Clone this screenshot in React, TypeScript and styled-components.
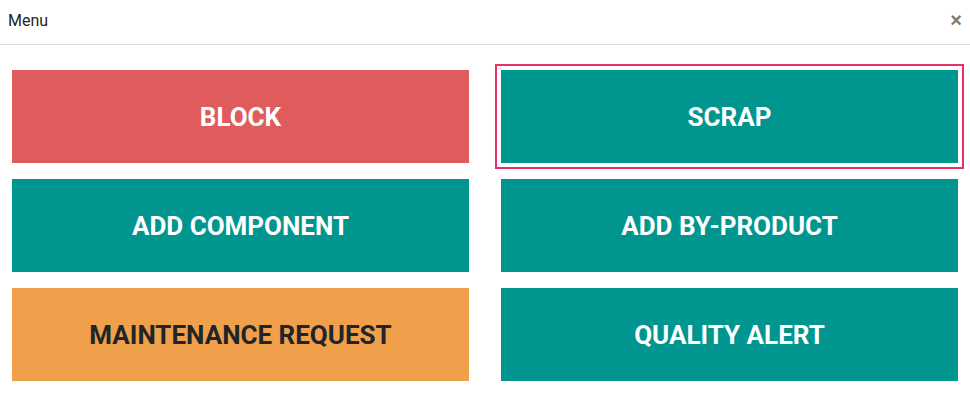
import styled, { createGlobalStyle, css } from "styled-components";

const GlobalStyle = createGlobalStyle`
  html, body {
    margin: 0;
    padding: 0;
    background: #ffffff;
    font-family: Roboto, "Noto Sans", sans-serif;
  }
`;

type Tone = "danger" | "primary" | "warning";

const tones: Record<Tone, { bg: string; fg: string }> = {
  danger: { bg: "#e05b5c", fg: "#ffffff" },
  primary: { bg: "#00968f", fg: "#ffffff" },
  warning: { bg: "#f0a04b", fg: "#212529" },
};

const actions: { label: string; tone: Tone; focused?: boolean }[] = [
  { label: "BLOCK", tone: "danger" },
  { label: "SCRAP", tone: "primary", focused: true },
  { label: "ADD COMPONENT", tone: "primary" },
  { label: "ADD BY-PRODUCT", tone: "primary" },
  { label: "MAINTENANCE REQUEST", tone: "warning" },
  { label: "QUALITY ALERT", tone: "primary" },
];

export default function App() {
  return (
    <>
      <GlobalStyle />
      <Dialog>
        <Header>
          <Title>Menu</Title>
          <Close aria-label="Close">×</Close>
        </Header>
        <Body>
          {actions.map((a) => (
            <ActionButton key={a.label} $tone={a.tone} $focused={a.focused}>
              {a.label}
            </ActionButton>
          ))}
        </Body>
      </Dialog>
    </>
  );
}

const Dialog = styled.div`
  width: 970px;
  height: 397px;
  background: #ffffff;
  display: flex;
  flex-direction: column;
`;

const Header = styled.div`
  height: 45px;
  border-bottom: 1px solid #dcdcdc;
  display: flex;
  align-items: center;
  justify-content: space-between;
  padding: 0 8px 3px 8px;
  box-sizing: border-box;
`;

const Title = styled.h4`
  margin: 0;
  font-size: 16px;
  font-weight: 400;
  color: #212529;
`;

const Close = styled.button`
  border: none;
  background: none;
  padding: 0;
  font-size: 20px;
  font-weight: 700;
  line-height: 1;
  color: #7a7a7a;
  margin-top: -2px;
  cursor: pointer;
`;

const Body = styled.div`
  display: grid;
  grid-template-columns: 457px 457px;
  grid-auto-rows: 93px;
  column-gap: 32px;
  row-gap: 16px;
  padding: 25px 12px 0 12px;
`;

const ActionButton = styled.button<{ $tone: Tone; $focused?: boolean }>`
  border: none;
  margin: 0;
  padding: 0;
  font-family: Roboto, "Noto Sans", sans-serif;
  font-size: 26px;
  font-weight: 700;
  letter-spacing: 0;
  background: ${(p) => tones[p.$tone].bg};
  color: ${(p) => tones[p.$tone].fg};
  cursor: pointer;
  ${(p) =>
    p.$focused &&
    css`
      outline: 2px solid #e8306f;
      outline-offset: 4px;
    `}
`;
